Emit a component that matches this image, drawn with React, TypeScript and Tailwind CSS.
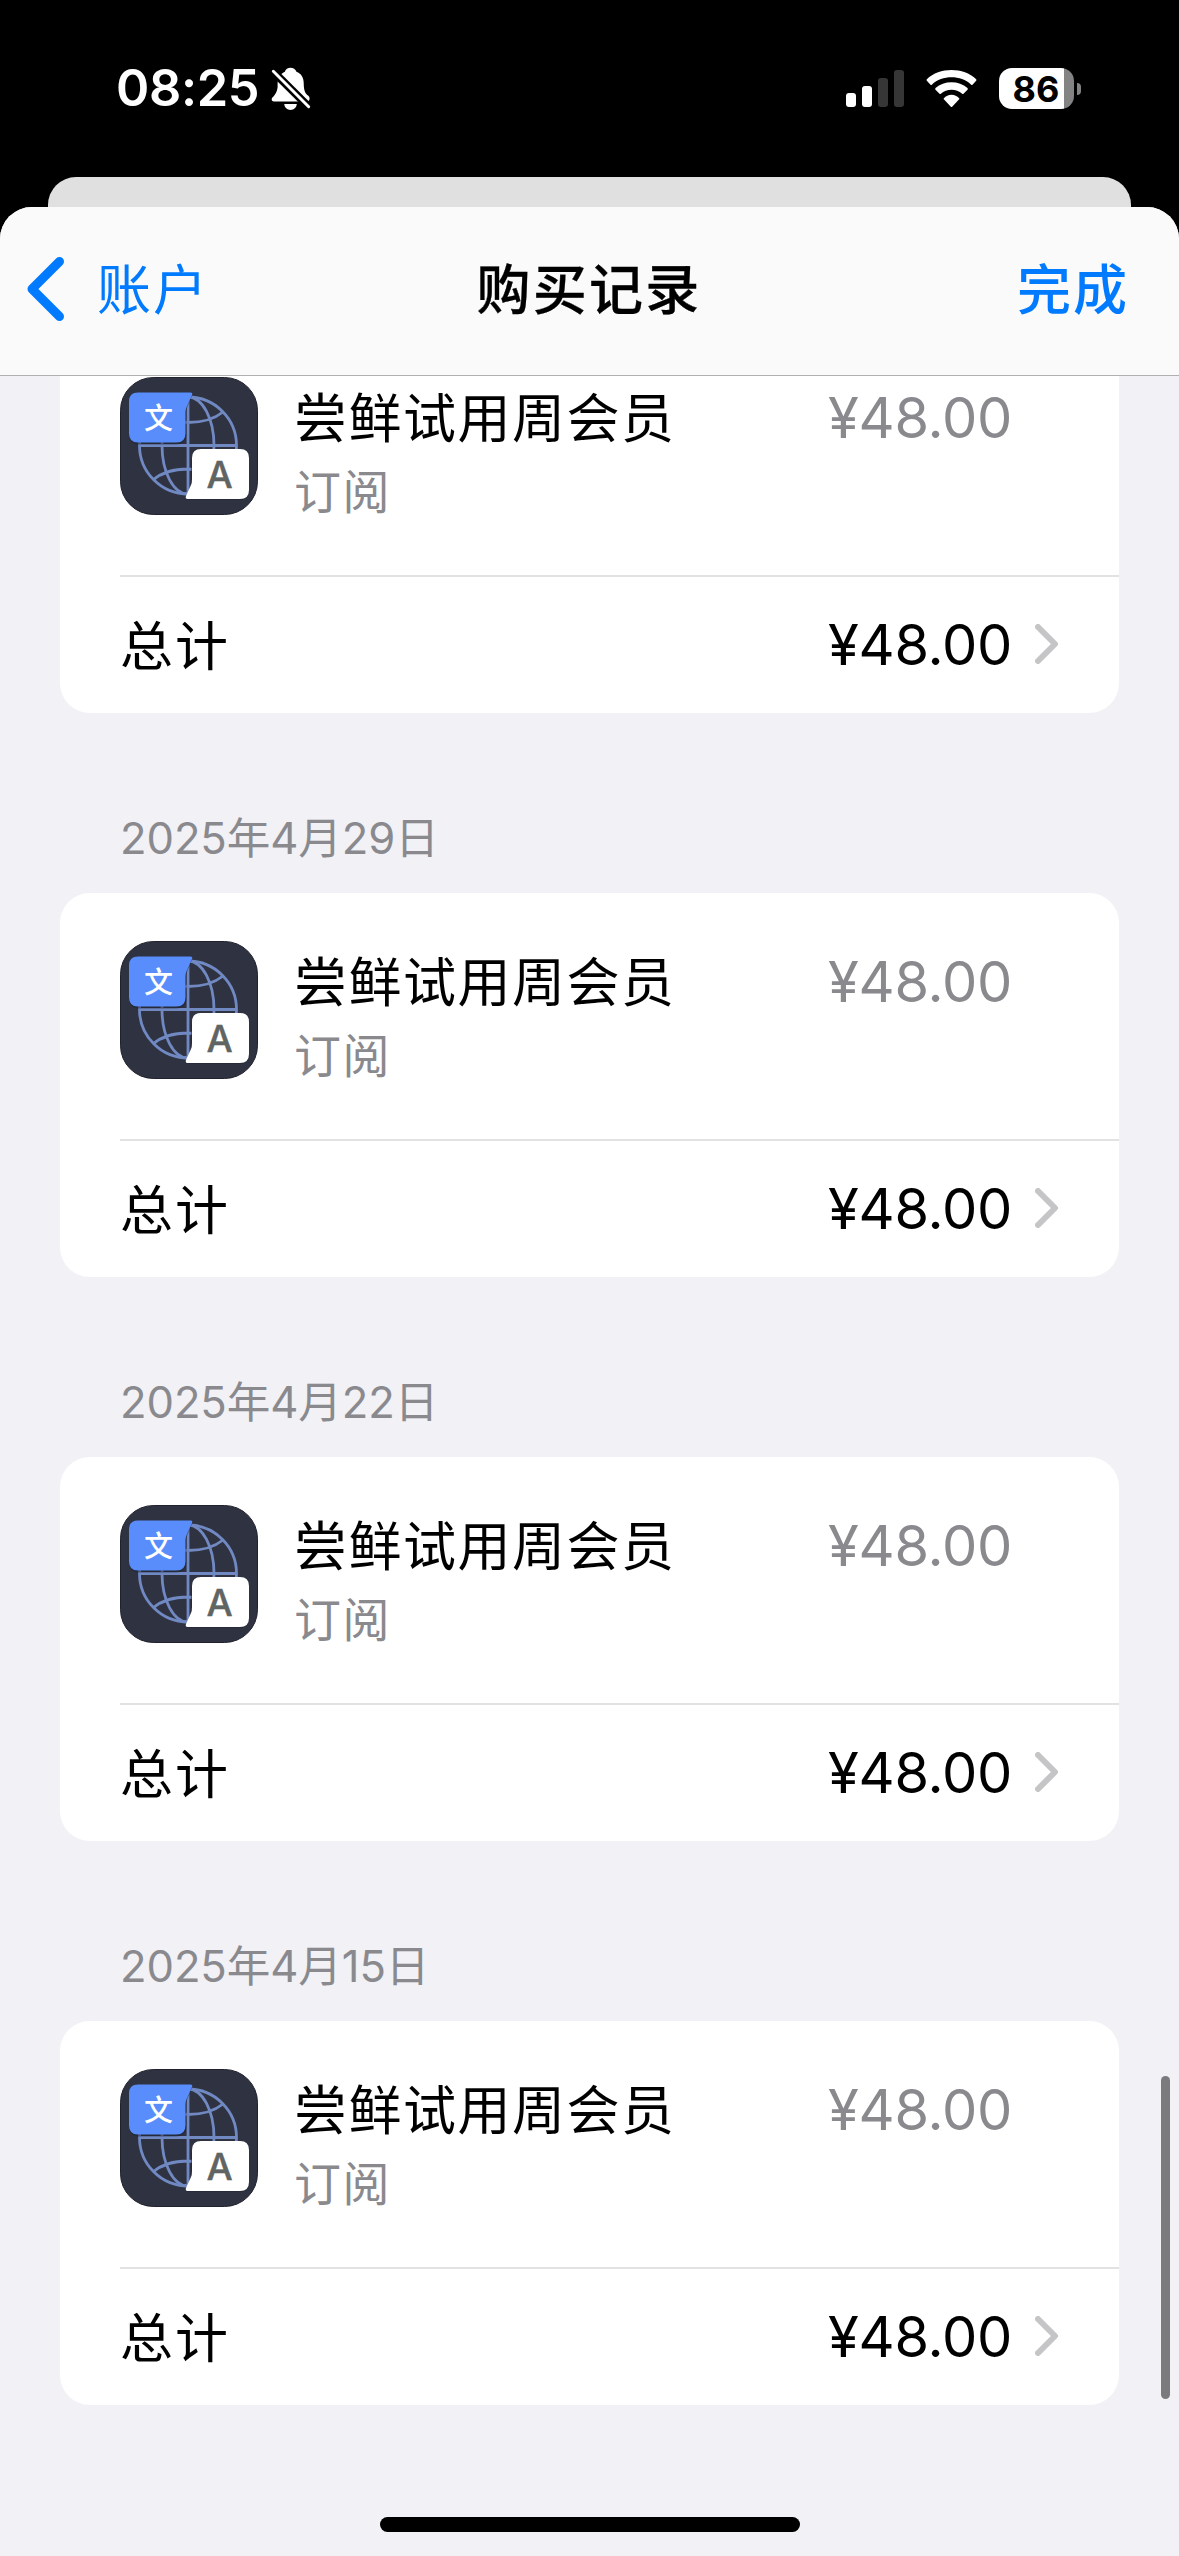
type Purchase = { date?: string; title: string; kind: string; price: string };

const purchases: Purchase[] = [
  { title: '尝鲜试用周会员', kind: '订阅', price: '¥48.00' },
  { date: '2025年4月29日', title: '尝鲜试用周会员', kind: '订阅', price: '¥48.00' },
  { date: '2025年4月22日', title: '尝鲜试用周会员', kind: '订阅', price: '¥48.00' },
  { date: '2025年4月15日', title: '尝鲜试用周会员', kind: '订阅', price: '¥48.00' },
];

function BellOff() {
  return (
    <svg viewBox="541 79 121 133" className="ml-[12px] h-[44px] w-[40px]">
      <path
        fill="#fff"
        d="M543 177C543 169 558 165 561 140V127C562 110 571 98 583 93C585 85 592 81 600 81C608 81 615 85 618 93C632 98 640 110 640 128C640 150 645 160 654 166C660 171 659 183 650 183H550C546 183 543 181 543 177Z"
      />
      <path fill="#fff" d="M581 191H619C618 202 610 209 600 209C590 209 582 202 581 191Z" />
      <path stroke="#000" strokeWidth="24" d="M537 82L666 210" />
      <path stroke="#fff" strokeWidth="9" strokeLinecap="round" d="M548 92L655 199" />
    </svg>
  );
}

function Wifi() {
  return (
    <svg viewBox="319 87 152 111" className="ml-[22px] h-[37px] w-[51px]" fill="#fff">
      <path d="M321 119Q319 117 321 115C340 96 367 87 395 87S450 96 469 115Q471 117 469 119L458 131Q456 133 454 131C438 116 417 109 395 109S352 116 336 131Q334 133 332 131Z" />
      <path d="M347 146Q345 144 347 141C360 130 377 124 395 124S430 130 443 141Q445 144 443 146L431 158Q429 160 427 158C418 150 407 146 395 146S372 150 363 158Q361 160 359 158Z" />
      <path d="M372 172C378 165 386 161 395 161S412 165 418 172Q419 174 418 175L397 197Q395 199 393 197L372 175Q371 174 372 172Z" />
    </svg>
  );
}

function StatusBar() {
  return (
    <div className="flex h-[177px] shrink-0 items-center pr-[98px] pl-[116px] text-white">
      <span className="-mt-px text-[50.5px] leading-[60px] font-semibold tracking-[-0.36px]">08:25</span>
      <BellOff />
      <div className="ml-auto flex h-[37px] items-end gap-[6px]">
        <div className="h-[14px] w-[10px] rounded-[3px] bg-white" />
        <div className="h-[21px] w-[10px] rounded-[3px] bg-white" />
        <div className="h-[29px] w-[10px] rounded-[3px] bg-[#363636]" />
        <div className="h-[37px] w-[10px] rounded-[3px] bg-[#363636]" />
      </div>
      <Wifi />
      <div className="ml-[22px] flex h-[41px] w-[75px] items-center justify-center overflow-hidden rounded-[13px] bg-linear-to-r from-white from-[65px] to-[#838383] to-[65px]">
        <span className="-ml-px text-[36px] leading-[40px] font-bold text-black">86</span>
      </div>
      <div className="ml-[3px] h-[12px] w-[4px] rounded-r-full bg-[#838383]" />
    </div>
  );
}

function NavBar() {
  return (
    <header className="grid h-[169px] shrink-0 grid-cols-[1fr_auto_1fr] items-center border-b border-[#b0b0b3] bg-[#fafafb] px-[27px] text-[54px] leading-[60px]">
      <div className="flex items-center text-[#007aff]">
        <svg viewBox="0 0 37 64" className="-mt-[5px] h-[64px] w-[37px]" fill="none">
          <path d="M32.5 4.5L5 32L32.5 59.5" stroke="currentColor" strokeWidth="9" strokeLinecap="round" strokeLinejoin="round" />
        </svg>
        <span className="-mt-px ml-[33px] text-[54px] tracking-[2px]">账户</span>
      </div>
      <h1 className="-mt-px -ml-px font-medium tracking-[2.2px] [-webkit-text-stroke:0.3px_black]">购买记录</h1>
      <span className="-mt-px mr-[23px] text-right font-medium tracking-[2px] text-[#007aff]">完成</span>
    </header>
  );
}

function AppIcon() {
  return (
    <svg viewBox="0 0 138 138" className="h-[138px] w-[138px] shrink-0">
      <rect x="0.5" y="0.5" width="137" height="137" rx="33" fill="#2f3241" stroke="#20222e" />
      <g fill="none" stroke="#7089c2" strokeWidth="2.8">
        <circle cx="68" cy="68.5" r="48.5" />
        <ellipse cx="68" cy="68.5" rx="26" ry="48.5" />
        <path d="M68 20V117M19.5 68.5H116.5M33 35Q46 45.5 68 45.5T103 35M33 103Q46 92 68 92T103 103" />
      </g>
      <path fill="#1f2230" opacity="0.5" d="M18 16.5H71Q73 16.5 72 19L67 31Q66.5 33 66.5 35V58Q66 67.5 56 67.5H18Q9 67 9 58V26Q9 17 18 16.5Z" />
      <path fill="#588dfb" d="M18 15.5H70.5Q73 15.5 72 18L67 29Q65.5 32 65.5 35V56.5Q65.5 65.5 56.5 65.5H18Q9 65.5 9 56.5V24.5Q9 15.5 18 15.5Z" />
      <path fill="#1f2230" opacity="0.5" d="M120 123H67Q65 123 66 120L71 110V82H129V114Q129 123 120 123Z" />
      <path fill="#fff" d="M120 72H81Q72 72 72 81V102Q72 106 71 108L66 119Q65 122 67.5 122H120Q129 122 129 113V81Q129 72 120 72Z" />
      <text x="38.5" y="51.5" textAnchor="middle" fontSize="29" fontWeight="500" fill="#fff">文</text>
      <text x="99.5" y="110.5" textAnchor="middle" fontSize="37" fontWeight="500" fill="#606462" stroke="#606462" strokeWidth="0.4">A</text>
    </svg>
  );
}

function PurchaseCard({ title, kind, price }: Purchase) {
  return (
    <div className="flex h-[384px] flex-col rounded-[30px] bg-white pl-[60px]">
      <div className="flex h-[246px] pt-[48px]">
        <AppIcon />
        <div className="ml-[36px] pt-[12px]">
          <div className="text-[53px] leading-[60px] tracking-[1.5px] text-black">{title}</div>
          <div className="mt-[16px] text-[47px] leading-[54px] tracking-[1.5px] text-[#8a8a8e]">{kind}</div>
        </div>
        <div className="mr-[107px] ml-auto pt-[11px] text-[56px] leading-[60px] tracking-[-0.3px] text-[#8a8a8e]">{price}</div>
      </div>
      <div className="h-[2px] bg-[#e2e2e3]" />
      <div className="flex h-[136px] items-center pr-[60px]">
        <span className="mt-[3px] text-[53px] leading-[60px] tracking-[1.9px] text-black">总计</span>
        <span className="ml-auto text-[56px] leading-[60px] tracking-[-0.3px] text-black">{price}</span>
        <svg viewBox="0 0 24 40" className="-mt-[2px] ml-[23px] h-[40px] w-[24px]" fill="none">
          <path d="M3 3L20 20L3 37" stroke="#c5c5c7" strokeWidth="6" strokeLinecap="round" strokeLinejoin="round" />
        </svg>
      </div>
    </div>
  );
}

export default function App() {
  return (
    <div className="relative flex h-[2556px] w-[1179px] flex-col overflow-hidden bg-black font-['Inter','Noto_Sans_CJK_SC',sans-serif]">
      <StatusBar />
      <div className="mx-[48px] h-[30px] shrink-0 rounded-t-[28px] bg-[#e0e0e0]" />
      <div className="flex min-h-0 flex-1 flex-col overflow-hidden rounded-t-[32px] bg-[#f2f1f6]">
        <NavBar />
        <main className="min-h-0 flex-1 overflow-hidden px-[60px]">
          <div className="-mt-[47px]">
            {purchases.map((p, i) => (
              <section key={i}>
                {p.date && (
                  <h2 className="h-[180px] pt-[102px] pl-[60px] text-[43.6px] leading-[48px] tracking-[-0.1px] text-[#8a8a8e]">{p.date}</h2>
                )}
                <PurchaseCard {...p} />
              </section>
            ))}
          </div>
        </main>
      </div>
      <div className="absolute top-[2076px] right-[9px] h-[323px] w-[9px] rounded-full bg-[#7b7b7d]" />
      <div className="absolute bottom-[24px] left-[380px] h-[15px] w-[420px] rounded-full bg-black" />
    </div>
  );
}
